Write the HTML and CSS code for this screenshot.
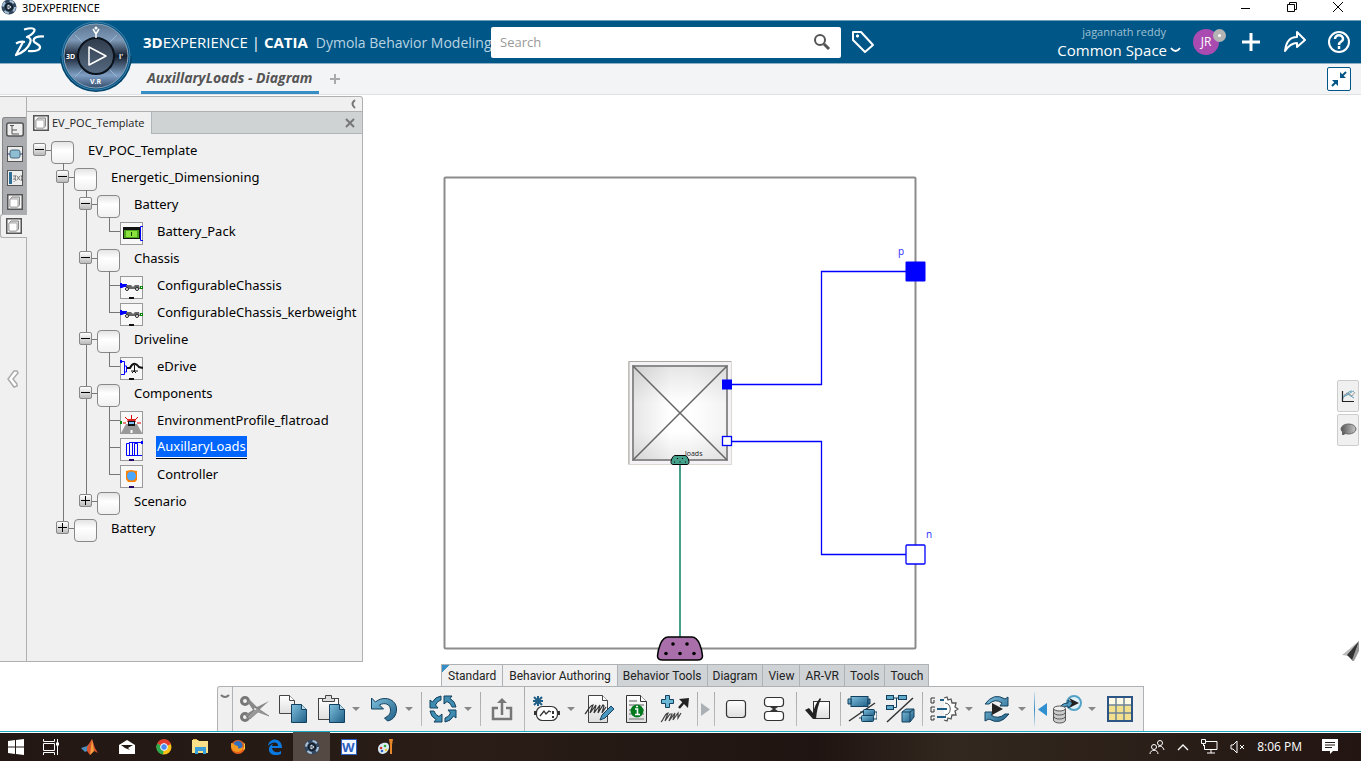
FILE: index.html
```html
<!DOCTYPE html>
<html lang="en">
<head>
    <meta charset="UTF-8">
    <meta name="viewport" content="width=device-width, initial-scale=1.0">
    <title>3DEXPERIENCE</title>
    <link rel="stylesheet" href="styles.css">
</head>
<body>

<!-- shared gradients and symbols -->
<svg class="defs" width="0" height="0" aria-hidden="true">
    <defs>
        <linearGradient id="blue" x1="0" y1="0" x2="1" y2="1">
            <stop offset="0" stop-color="#7fc0de"/><stop offset="1" stop-color="#1f5f86"/>
        </linearGradient>
        <linearGradient id="paper" x1="0" y1="0" x2="0" y2="1">
            <stop offset="0" stop-color="#ffffff"/><stop offset="1" stop-color="#dedede"/>
        </linearGradient>
        <linearGradient id="steel" x1="0" y1="0" x2="0" y2="1">
            <stop offset="0" stop-color="#5b7590"/><stop offset=".25" stop-color="#7f9ab8"/><stop offset=".5" stop-color="#15202f"/><stop offset=".8" stop-color="#7f9fc4"/><stop offset="1" stop-color="#344d6c"/>
        </linearGradient>
        <linearGradient id="hub" x1="0" y1="0" x2="0" y2="1">
            <stop offset="0" stop-color="#303c4d"/><stop offset="1" stop-color="#566a80"/>
        </linearGradient>
        <linearGradient id="gray" x1="0" y1="0" x2="1" y2="0">
            <stop offset="0" stop-color="#555"/><stop offset="1" stop-color="#c8c8c8"/>
        </linearGradient>
    </defs>
    <symbol id="compass-small" viewBox="0 0 16 16">
        <circle cx="8" cy="8" r="7.5" fill="#33485f"/>
        <circle cx="8" cy="8" r="6" fill="none" stroke="#a9c2d8" stroke-width="2" stroke-dasharray="4.7 4.7"/>
        <circle cx="8" cy="8" r="3.6" fill="#26384d" stroke="#0c1520"/>
        <path d="M7 6l3 2-3 2z" fill="none" stroke="#fff" stroke-width=".8"/>
    </symbol>
    <symbol id="cube" viewBox="0 0 16 16">
        <rect x=".75" y=".75" width="14.5" height="14.5" fill="#f6f6f6" stroke="#555" stroke-width="1.5"/>
        <path d="M3 5.500L5 3h7.500v8L10.500 13H3z" fill="#ddd" stroke="#888"/>
        <rect x="3" y="5" width="8" height="8" rx="1" fill="#fff" stroke="#aaa"/>
    </symbol>
    <symbol id="chassis" viewBox="0 0 23 23">
        <rect x=".5" y=".5" width="22" height="22" fill="#f8f8f8" stroke="#999"/>
        <path d="M0 12V7h2v1h5v3H4l-2 1z" fill="#0000ff"/>
        <path d="M6 9h5l2 2 2-2h4l1 4H7z" fill="#666"/>
        <circle cx="7" cy="13" r="1.500" fill="#fff" stroke="#222"/>
        <circle cx="17" cy="13" r="1.500" fill="#fff" stroke="#222"/>
        <rect x="20.500" y="10.500" width="2" height="2" fill="#fff" stroke="#008000"/>
        <rect x="9" y="21" width="5" height="2" fill="#111"/>
    </symbol>
    <symbol id="turn" viewBox="0 0 28 28">
        <path d="M12 1Q6 2 3.500 7L1 5v8h8l-2.500-3Q8 6 12 5z" fill="#3f8db3" stroke="#12405e"/>
    </symbol>
</svg>

<div class="titlebar">
    <svg width="16" height="16"><use href="#compass-small"/></svg>
    <span class="title">3DEXPERIENCE</span>
    <button class="win" aria-label="Minimize"><svg width="12" height="12"><path d="M1 7.500h9" stroke="#000"/></svg></button>
    <button class="win" aria-label="Restore"><svg width="12" height="12" fill="none" stroke="#000"><path d="M1.500 3.500h7v7h-7zM3.500 3.500v-2h7v7h-2"/></svg></button>
    <button class="win" aria-label="Close"><svg width="12" height="12"><path d="M1 1l10 10M11 1L1 11" stroke="#000"/></svg></button>
</div>

<header class="header">
    <svg class="logo" width="32" height="30" fill="none" stroke="#fff" stroke-width="2.200" stroke-linejoin="round">
        <path d="M10 2.500Q19 0 20.500 2.500 21 6 13 10 18 11 16 16 13 24 2 28L9 15"/>
        <path d="M2 16.500Q6 14 11 15"/>
        <path d="M30 9.500Q20 9 19.500 13.500C20 17 27 17 26 21Q24 25 14 24"/>
    </svg>
    <svg class="compass" width="76" height="74" viewBox="0 1 76 74">
        <path d="M2 36a36 36 0 0 0 72 0z" fill="#00446c"/>
        <circle cx="38" cy="36" r="34" fill="#0a5a8c" stroke="#3c7ea6"/>
        <circle cx="38" cy="36" r="32" fill="url(#steel)" stroke="#8ba3b8"/>
        <path d="M17 15l8 8M59 15l-8 8M17 57l8-8M59 57l-8-8" stroke="#9db6cf"/>
        <circle cx="38" cy="36" r="18" fill="url(#hub)" stroke="#0b121b" stroke-width="2"/>
        <path d="M31 27v18l17-9z" fill="none" stroke="#fff" stroke-width="1.500" stroke-linejoin="round"/>
        <path d="M35 9l3 5 3-5M38 13v5" fill="none" stroke="#fff" stroke-width="1.500"/>
        <circle cx="38" cy="8" r="1.500" fill="#fff"/>
        <text x="8" y="39" class="compass-text">3D</text>
        <text x="32" y="64" class="compass-text">V.R</text>
        <text x="61" y="39" class="compass-text">i'</text>
    </svg>
    <div class="brand"><b>3D</b>EXPERIENCE | <b>CATIA</b> <span class="app-name">Dymola Behavior Modeling</span></div>
    <form class="search">
        <input type="text" aria-label="Search" placeholder="Search">
        <button type="button" aria-label="Run search"><svg width="18" height="18" fill="none" stroke="#555"><circle cx="7" cy="7" r="5" stroke-width="2"/><path d="M11 11l5 5" stroke-width="3"/></svg></button>
    </form>
    <button class="icon-btn" aria-label="Tags"><svg width="24" height="24" fill="none" stroke="#fff" stroke-width="2" stroke-linejoin="round"><path d="M2 2h8l12 13-8 7L2 10z"/><circle cx="6.500" cy="6" r="1.200" fill="#fff" stroke-width="1"/></svg></button>
    <div class="user">
        <span class="user-name">jagannath reddy</span>
        <button class="space">Common Space <svg width="11" height="6"><path d="M1 1c3 4 6 4 9 0" fill="none" stroke="#fff" stroke-width="2"/></svg></button>
    </div>
    <div class="avatar">JR<span class="status"></span></div>
    <button class="icon-btn" aria-label="Add"><svg width="24" height="24"><path d="M12 3v18M3 12h18" stroke="#fff" stroke-width="3"/></svg></button>
    <button class="icon-btn" aria-label="Share"><svg width="24" height="24" fill="none" stroke="#fff" stroke-width="2" stroke-linejoin="round"><path d="M14 2l8 8-8 7v-4c-5 0-8 2-12 8 1-9 5-14 12-14z"/></svg></button>
    <button class="icon-btn" aria-label="Help"><svg width="24" height="24" fill="none" stroke="#fff"><circle cx="12" cy="12" r="10" stroke-width="2"/><path d="M8 9c0-5 8-5 8 0 0 3-4 2-4 6M12 16v3" stroke-width="2.500"/></svg></button>
</header>

<nav class="tabbar">
    <a class="doc-tab" href="#">AuxillaryLoads - Diagram</a>
    <button class="new-tab" aria-label="New tab"><svg width="12" height="12"><path d="M6 1v10M1 6h10" stroke="#aaa" stroke-width="2"/></svg></button>
    <button class="collapse" aria-label="Exit immersive"><svg width="22" height="22" fill="none" stroke="#005686" stroke-width="2"><path d="M4 18l5-5M18 4l-5 5"/><path d="M4 12h6v6zM12 4v6h6z" fill="#005686" stroke="none"/></svg></button>
</nav>

<main class="workspace">
    <aside class="panel">
        <div class="strip">
            <div class="strip-tabs">
                <div class="strip-group">
                    <button aria-label="Tree"><svg width="18" height="16"><rect x=".75" y="1" width="16.500" height="13" rx="2" fill="#eee" stroke="#555" stroke-width="1.500"/><path d="M4 3.500h4M6 4v8h7M6 8h5" fill="none" stroke="#555"/></svg></button>
                    <button aria-label="Component"><svg width="16" height="16"><rect x=".5" y=".5" width="15" height="15" fill="#eee" stroke="#555"/><path d="M0 8h16" stroke="#336"/><rect x="3" y="4" width="10" height="8" rx="2" fill="#8fbdd2" stroke="#47697c"/></svg></button>
                    <button aria-label="Parameters"><svg width="16" height="16"><rect x=".5" y=".5" width="15" height="15" fill="#eee" stroke="#555"/><path d="M3.500 2v12" stroke="#2f6f96" stroke-width="3"/><path d="M7 5v7" stroke="#777" stroke-dasharray="2 1"/><path d="M9 5q-2 3 0 6M14 5q2 3 0 6M10 6l3 4M13 6l-3 4" fill="none" stroke="#777"/></svg></button>
                    <button aria-label="Library"><svg width="16" height="16"><use href="#cube"/></svg></button>
                </div>
                <button class="active" aria-label="Template"><svg width="16" height="16"><use href="#cube"/></svg></button>
            </div>
            <button class="fold" aria-label="Fold panel"><svg width="14" height="20"><path d="M11 2L8 2 2 10l6 8 3-1v-2l-4-5 5-6z" fill="#fff" stroke="#aaa" stroke-width="1.500"/></svg></button>
            <div class="strip-rest"></div>
        </div>
        <div class="browser">
            <div class="browser-top"><button aria-label="Hide"><svg width="6" height="10"><path d="M5 1Q0 5 5 9" fill="none" stroke="#777" stroke-width="2"/></svg></button></div>
            <div class="browser-tabs">
                <span class="browser-tab"><svg width="16" height="16"><use href="#cube"/></svg>EV_POC_Template</span>
                <button aria-label="Close tab"><svg width="12" height="12"><path d="M2 2l8 8M10 2l-8 8" stroke="#777" stroke-width="2"/></svg></button>
            </div>
            <ul class="tree">
                <li>
                    <div class="row"><button class="toggle" aria-label="Collapse"></button><i class="box"></i><span>EV_POC_Template</span></div>
                    <ul>
                        <li>
                            <div class="row"><button class="toggle" aria-label="Collapse"></button><i class="box"></i><span>Energetic_Dimensioning</span></div>
                            <ul>
                                <li>
                                    <div class="row"><button class="toggle" aria-label="Collapse"></button><i class="box"></i><span>Battery</span></div>
                                    <ul>
                                        <li><div class="row leaf"><svg width="23" height="23"><rect x=".5" y=".5" width="22" height="22" fill="#f8f8f8" stroke="#999"/><path d="M23 4.500h-2.500v14H23" fill="none" stroke="#00f"/><rect x="3" y="5" width="17" height="12" fill="#111"/><rect x="4" y="8" width="15" height="8" fill="#4da51f"/><rect x="6" y="9" width="11" height="6" fill="#8be23f"/><path d="M11.500 10v4" stroke="#163c05"/></svg><span>Battery_Pack</span></div></li>
                                    </ul>
                                </li>
                                <li>
                                    <div class="row"><button class="toggle" aria-label="Collapse"></button><i class="box"></i><span>Chassis</span></div>
                                    <ul>
                                        <li><div class="row leaf"><svg width="23" height="23"><use href="#chassis"/></svg><span>ConfigurableChassis</span></div></li>
                                        <li><div class="row leaf"><svg width="23" height="23"><use href="#chassis"/></svg><span>ConfigurableChassis_kerbweight</span></div></li>
                                    </ul>
                                </li>
                                <li>
                                    <div class="row"><button class="toggle" aria-label="Collapse"></button><i class="box"></i><span>Driveline</span></div>
                                    <ul>
                                        <li><div class="row leaf"><svg width="23" height="23"><rect x=".5" y=".5" width="22" height="22" fill="#f8f8f8" stroke="#999"/><path d="M1 4.500h3.500v13H1M4.500 9h2v6h-2" fill="none" stroke="#00f"/><rect x="0" y="3" width="2" height="3" fill="#00f"/><path d="M7 11h3q4-8 9-1l4 1" fill="none" stroke="#111" stroke-width="2"/><path d="M11 14h7M14.500 8v6M12 16l2-2 2 2" fill="none" stroke="#111"/><rect x="9" y="21" width="5" height="2" fill="#111"/></svg><span>eDrive</span></div></li>
                                    </ul>
                                </li>
                                <li>
                                    <div class="row"><button class="toggle" aria-label="Collapse"></button><i class="box"></i><span>Components</span></div>
                                    <ul>
                                        <li><div class="row leaf"><svg width="23" height="23"><rect x=".5" y=".5" width="22" height="22" fill="#f8f8f8" stroke="#999"/><path d="M6 13h11l5 9H1z" fill="#999"/><path d="M11.500 22v-3" stroke="#fff" stroke-width="2"/><path d="M3 12h3M17 12h4M5 6l3 3M18 6l-3 3M11.500 4v4" stroke="#d00"/><path d="M8 8h7l1 3H7z" fill="#d22"/><rect x="8" y="10" width="7" height="5" fill="#111"/><rect x="9" y="11" width="5" height="2" fill="#7fc4ff"/><rect x="0" y="10" width="2" height="3" fill="#080"/></svg><span>EnvironmentProfile_flatroad</span></div></li>
                                        <li><div class="row leaf"><svg width="23" height="23"><rect x=".5" y=".5" width="22" height="22" fill="#f8f8f8" stroke="#999"/><path d="M6.500 5.500h3v12h-3zM14.500 5.500h3v12h-3zM9 4.500h13M9 17.500h13M12.500 5v13" fill="none" stroke="#00f"/><rect x="21" y="3" width="2" height="3" fill="#00f"/><rect x="9" y="21" width="5" height="2" fill="#206"/></svg><span class="selected">AuxillaryLoads</span></div></li>
                                        <li><div class="row leaf"><svg width="23" height="23"><rect x=".5" y=".5" width="22" height="22" fill="#f8f8f8" stroke="#999"/><path d="M6 6l5-1 6 1v9l-2 2H8l-2-3z" fill="#ff8000"/><circle cx="11.500" cy="11" r="4.500" fill="#4ba6ff"/><rect x="9" y="21" width="5" height="2" fill="#206"/></svg><span>Controller</span></div></li>
                                    </ul>
                                </li>
                                <li><div class="row"><button class="toggle plus" aria-label="Expand"></button><i class="box"></i><span>Scenario</span></div></li>
                            </ul>
                        </li>
                        <li><div class="row"><button class="toggle plus" aria-label="Expand"></button><i class="box"></i><span>Battery</span></div></li>
                    </ul>
                </li>
            </ul>
        </div>
    </aside>

    <section class="canvas">
        <svg class="diagram" width="500" height="566" viewBox="440 95 500 566">
            <defs>
                <linearGradient id="shadeX"><stop offset="0" stop-color="#000" stop-opacity=".1"/><stop offset=".4" stop-color="#000" stop-opacity="0"/><stop offset=".6" stop-color="#000" stop-opacity="0"/><stop offset="1" stop-color="#000" stop-opacity=".05"/></linearGradient>
                <linearGradient id="shadeY" x2="0" y2="1"><stop offset="0" stop-color="#000" stop-opacity=".1"/><stop offset=".4" stop-color="#000" stop-opacity="0"/><stop offset=".7" stop-color="#000" stop-opacity="0"/><stop offset="1" stop-color="#000" stop-opacity=".08"/></linearGradient>
            </defs>
            <rect x="444.500" y="177.500" width="471" height="471" rx="1" fill="none" stroke="#8c8c8c" stroke-width="2"/>
            <!-- loads component -->
            <rect x="628.500" y="361.500" width="103" height="103" fill="#f4f2f4" stroke="#dcd9d4"/>
            <path d="M629 464V361.500h102" fill="none" stroke="#aaa6a0"/>
            <rect x="633" y="366" width="94" height="94" fill="#fff"/>
            <rect x="633" y="366" width="94" height="94" fill="url(#shadeX)"/>
            <rect x="633" y="366" width="94" height="94" fill="url(#shadeY)" stroke="#8c8c8c" stroke-width="2"/>
            <path d="M633 366l94 94M727 366l-94 94" stroke="#666" stroke-width="1.500"/>
            <text x="685" y="456" class="node-label">loads</text>
            <!-- connections -->
            <path d="M727 384.500h94.500v-113H906M727 441.500h94.500v113H906" fill="none" stroke="#0000ff" stroke-width="1.300"/>
            <path d="M680 465v172" stroke="#45a08c" stroke-width="2"/>
            <!-- pins -->
            <rect x="722" y="379.500" width="10" height="10" fill="#0000ff"/>
            <rect x="722.500" y="436.500" width="9" height="9" fill="#fff" stroke="#0000ff" stroke-width="1.300"/>
            <rect x="905.500" y="261.500" width="20" height="20" rx="1" fill="#0000ff"/>
            <rect x="906" y="545" width="19" height="19" rx="1" fill="#fff" stroke="#0000ff" stroke-width="1.300"/>
            <text x="898" y="255" class="pin-label">p</text>
            <text x="926" y="538" class="pin-label">n</text>
            <path d="M675 455.500h10c2 0 4 4 4 7 0 1-1 2-2 2h-14c-1 0-2-1-2-2 0-3 2-7 4-7z" fill="#45a08c" stroke="#000"/>
            <path d="M677 458.500h1M682 458.500h1M674 462h1M679.500 462h1M685 462h1" stroke="#000"/>
            <path d="M668 637h24c7 0 10 13 10.500 19 0 3-2 4-5 4h-35c-3 0-5-1-5-4 .5-6 3.500-19 10.500-19z" fill="#a86fab" stroke="#000" stroke-width="1.500"/>
            <g><circle cx="673" cy="644" r="1.800"/><circle cx="687" cy="644" r="1.800"/><circle cx="666" cy="653.500" r="1.800"/><circle cx="680" cy="653.500" r="1.800"/><circle cx="694" cy="653.500" r="1.800"/></g>
        </svg>
        <div class="side-tools">
            <button aria-label="Plot"><svg width="16" height="16" fill="none"><path d="M2 8c5 1 8-4 12-5M2 12c4-7 8-9 10-9M6 5l8 5" stroke="#5b9bb5"/><path d="M4 7l4-2 4 3 3-4" stroke="#999"/><path d="M2.500 3v10.500H14" stroke="#222" stroke-width="1.200"/></svg></button>
            <button aria-label="Comments"><svg width="18" height="14"><ellipse cx="9.500" cy="6" rx="7.500" ry="5" fill="url(#gray)" stroke="#666"/><path d="M3 8v4H1l4 0 2-2z" fill="#666"/></svg></button>
            <svg class="pointer" width="17" height="21"><path d="M17 0L0 14l7 1z" fill="#bbb"/><path d="M17 0L5 14l6 6z" fill="#333"/><path d="M17 0v10l-5 10-2-1z" fill="#999"/></svg>
        </div>
    </section>
</main>

<footer class="action-bar">
    <div class="sections">
        <button class="light first">Standard</button><button class="light">Behavior Authoring</button><button>Behavior Tools</button><button>Diagram</button><button>View</button><button>AR-VR</button><button>Tools</button><button>Touch</button>
    </div>
    <div class="toolbar">
        <button class="grip" aria-label="Options"><svg width="10" height="5"><path d="M1 1q4 4 8 0" fill="none" stroke="#777" stroke-width="2"/></svg></button>
        <div class="tools">
            <button class="tool" aria-label="Cut"><svg width="32" height="28"><g fill="none" stroke="#777" stroke-width="3"><circle cx="6" cy="6" r="3.500"/><circle cx="6" cy="22" r="3.500"/></g><path d="M8 6l3-1 7 7 12-6-10 9-5 3-6 7-3-5 8-5z" fill="#888"/><path d="M8 22l7-7 2-3 13 9-11-4-8 7z" fill="#999" stroke="#666" stroke-width=".5"/><circle cx="16" cy="14" r="1" fill="#eee"/></svg></button>
            <button class="tool" aria-label="Copy"><svg width="30" height="30"><path d="M1.500 1.500h10l5 5v13h-15z" fill="url(#paper)" stroke="#444"/><path d="M11.500 1.500v5h5" fill="#fff" stroke="#444"/><path d="M13.500 10.500h10l5 5v13h-15z" fill="url(#blue)" stroke="#12405e"/><path d="M23.500 10.500v5h5" fill="#b9dcea" stroke="#12405e"/></svg></button>
            <button class="tool" aria-label="Paste"><svg width="30" height="30"><rect x="2.500" y="4.500" width="20" height="21" fill="url(#paper)" stroke="#444"/><path d="M6.500 7.500v-3h3v-3h6v3h3v3z" fill="#ddd" stroke="#444"/><path d="M13.500 10.500h10l5 5v13h-15z" fill="url(#blue)" stroke="#12405e"/><path d="M23.500 10.500v5h5" fill="#b9dcea" stroke="#12405e"/></svg></button>
            <button class="more" aria-label="More paste options"></button>
            <button class="tool" aria-label="Undo"><svg width="28" height="28"><path d="M1.500 3v11h12l-4-4c5-3 11-1 11 5 0 4-2 6-6 8l3 3c6-1 9-6 9-12 0-10-13-14-21-7z" fill="url(#blue)" stroke="#12405e"/></svg></button>
            <button class="more" aria-label="More undo options"></button>
            <i class="sep"></i>
            <button class="tool" aria-label="Update"><svg width="28" height="28"><use href="#turn"/><use href="#turn" transform="rotate(90 14 14)"/><use href="#turn" transform="rotate(180 14 14)"/><use href="#turn" transform="rotate(270 14 14)"/></svg></button>
            <button class="more" aria-label="More update options"></button>
            <i class="sep"></i>
            <button class="tool" aria-label="Export"><svg width="24" height="24" fill="none" stroke="#777" stroke-width="2.500"><path d="M8 11H3v11h18V11h-5M12 18V5"/><path d="M7 6l5-5 5 5z" fill="#777" stroke="none"/></svg></button>
            <i class="sep full"></i>
            <button class="tool" aria-label="New behavior"><svg width="30" height="30"><path d="M7 2v10M2 7h10M3 3l8 8M11 3l-8 8" stroke="#1f5f86" stroke-width="2"/><rect x="5.500" y="12.500" width="21" height="14" rx="6" fill="#fff" stroke="#333" stroke-width="1.200"/><path d="M3 17h3v4H3zM26 17h3v4h-3z" fill="#333"/><path d="M9 22l4-5 2 3 3-3 2 1" fill="none" stroke="#333" stroke-width="1.300"/><path d="M22 17v3M22 22v2" stroke="#333" stroke-width="2"/></svg></button>
            <button class="more" aria-label="More behaviors"></button>
            <button class="tool" aria-label="Edit text"><svg width="30" height="30"><path d="M4.500 1.500h14l5 5v22h-19z" fill="url(#paper)" stroke="#444"/><path d="M18.500 1.500v5h5" fill="#fff" stroke="#444"/><path d="M1 20c3-3 4-8 8-9l-3 8 6-8-2 8 6-8-2 8 5-8 1 1-2 7 4-6" fill="none" stroke="#333" stroke-width="1.200"/><path d="M16 26l2-5 9-9 3 3-9 9z" fill="#4b97bf" stroke="#12405e"/></svg></button>
            <button class="tool" aria-label="Information"><svg width="26" height="30"><path d="M2.500 1.500h14l6 6v21h-20z" fill="url(#paper)" stroke="#333"/><path d="M16.500 1.500v6h6" fill="#fff" stroke="#333"/><path d="M5 7h8M5 11h15M5 16h15M5 20h15M5 25h15" stroke="#aaa" stroke-width="2"/><circle cx="13" cy="17" r="6.500" fill="#007a1c"/><path d="M11 15h2.500v5M11 20.500h5M12 12.500h2" fill="none" stroke="#fff" stroke-width="1.600"/></svg></button>
            <button class="tool" aria-label="Create text"><svg width="30" height="30"><path d="M5.500 1.500h4v4h4v4h-4v4h-4v-4h-4v-4h4z" fill="#6bb7d6" stroke="#12405e"/><path d="M19 14l6-7" stroke="#222" stroke-width="2.500"/><path d="M19 5l10-1-1 10-3-3-3-3z" fill="#222"/><path d="M1 28c3-2 3-8 7-9l-3 8 5-7 2 0-3 7 6-8-2 7 5-7v5l3-5" fill="none" stroke="#444" stroke-width="1.200"/></svg></button>
            <i class="sep"></i>
            <button class="nav" aria-label="Next"><svg width="9" height="13"><path d="M0 0l9 6.500L0 13z" fill="#aab0b4"/></svg></button>
            <i class="sep"></i>
            <button class="tool" aria-label="Block"><svg width="22" height="20"><rect x="1.500" y="1.500" width="19" height="17" rx="3" fill="url(#paper)" stroke="#333" stroke-width="1.200"/></svg></button>
            <button class="tool" aria-label="Connected blocks"><svg width="22" height="26"><rect x="1.500" y="1.500" width="19" height="9" rx="3" fill="#fff" stroke="#333" stroke-width="1.200"/><rect x="1.500" y="15.500" width="19" height="9" rx="3" fill="#fff" stroke="#333" stroke-width="1.200"/><path d="M7 11h8l-3 2 3 2H7l3-2z" fill="#333"/></svg></button>
            <i class="sep"></i>
            <button class="tool" aria-label="Check"><svg width="26" height="26"><rect x="8.500" y="5.500" width="16" height="17" fill="url(#paper)" stroke="#333"/><path d="M0 14l4-2 4 5q2-9 7-15l1 1q-4 8-5 20H8z" fill="#222"/></svg></button>
            <i class="sep"></i>
            <button class="tool" aria-label="Compare blocks"><svg width="30" height="28"><path d="M2 26L28 8" stroke="#333" stroke-width="1.500"/><g fill="url(#blue)" stroke="#12405e"><rect x="4" y="1.500" width="17" height="10"/><path d="M1 4h3v5H1zM21 4h2v5h-2z"/><rect x="16.500" y="14.500" width="11" height="6" rx="1"/><rect x="14.500" y="20.500" width="12" height="6" rx="1"/></g><path d="M13 17h3M28 17h2v7h-3M12 23h2" fill="none" stroke="#12405e"/></svg></button>
            <button class="tool" aria-label="Compare structure"><svg width="30" height="28"><path d="M2 27L28 3" stroke="#333" stroke-width="1.500"/><path d="M8 3h6M11.500 3v9.500H8" fill="none" stroke="#12405e"/><g fill="#62aaca" stroke="#12405e"><rect x="1.500" y=".5" width="7" height="4"/><rect x="13.500" y=".5" width="8" height="4"/><rect x="1.500" y="10.500" width="7" height="4"/></g><path d="M17 17l4-3h8v8l-4 5h-8z" fill="url(#blue)" stroke="#12405e"/><path d="M17 17h8v10M25 17l4-3" fill="none" stroke="#12405e"/></svg></button>
            <i class="sep"></i>
            <button class="tool" aria-label="Settings"><svg width="30" height="26"><path d="M15 2l3-1 1 3 3-1 1 4 4 0-1 4 3 2-3 2 1 4-4 0-1 4-3-1-1 3-3-1" fill="#fff" stroke="#555" stroke-width="1.300"/><path d="M16 7c7 0 7 12 0 12" fill="none" stroke="#555"/><path d="M6 2H2v5h3v-3M6 11H2v5h3v-3M6 20H2v4h3v-2" fill="none" stroke="#333"/><path d="M11 4h4M8 13h10M8 21h9" stroke="#1f5f86" stroke-width="2"/></svg></button>
            <button class="more" aria-label="More settings"></button>
            <button class="tool" aria-label="Simulate"><svg width="30" height="28" fill="url(#blue)" stroke="#12405e"><path d="M3 9Q12-3 23 4l3-2v9h-8l2-3Q13 3 7 9zM27 19q-9 12-20 5l-4 2v-9h8l-2 3q7 5 14-1z"/><path d="M10 8l11 6-11 6z" fill="#222" stroke="none"/></svg></button>
            <button class="more" aria-label="More simulation options"></button>
            <i class="sep blue"></i>
            <button class="nav" aria-label="Previous"><svg width="9" height="13"><path d="M9 0L0 6.500 9 13z" fill="#2f8fcf"/></svg></button>
            <button class="tool" aria-label="Results"><svg width="30" height="30"><circle cx="22" cy="9" r="7" fill="#dff1f9" stroke="#54a3c7" stroke-width="2"/><path d="M7 17q1-8 9-8V6l6 4-6 4v-2q-5 0-5 5" fill="#4e9abf" stroke="#12405e"/><path d="M17 4l10 5-10 5 3-5z" fill="#222"/><path d="M1.500 15v11c0 4 12 4 12 0V15" fill="#ccc" stroke="#555"/><ellipse cx="7.500" cy="14.500" rx="6" ry="2.500" fill="#eee" stroke="#555"/><path d="M1.500 18c0 4 12 4 12 0M1.500 22c0 4 12 4 12 0" fill="none" stroke="#555"/></svg></button>
            <button class="more" aria-label="More results"></button>
            <button class="tool" aria-label="Table"><svg width="26" height="26"><rect x="1" y="1" width="24" height="24" fill="#f2e08c"/><rect x="1" y="1" width="24" height="8" fill="#fffbe6"/><path d="M9 1v24M17 1v24M1 9h24M1 17h24" stroke="#6f8599" stroke-width="1.500"/><rect x="1" y="1" width="24" height="24" fill="none" stroke="#2c5586" stroke-width="2"/></svg></button>
        </div>
    </div>
</footer>

<div class="taskbar">
    <button class="start" aria-label="Start"><svg width="16" height="16" fill="#fff"><path d="M0 2l7-1v6.500H0zM8 1l8-1v7.500H8zM0 8.500h7V15l-7-1zM8 8.500h8V16l-8-1z"/></svg></button>
    <button class="view" aria-label="Task view"><svg width="17" height="16" fill="none" stroke="#fff"><path d="M.5 0v2.500h11V0M.5 16v-2.500h11V16M.5 4.500h11v7H.5zM14.500 0v16"/><path d="M13 5h3" stroke-width="3"/></svg></button>
    <button aria-label="MATLAB"><svg width="18" height="16"><path d="M0 9l6-2 3-3-3 8-2 1z" fill="#4a8fc0"/><path d="M6 8l5-8 3 9 3 5-4-2-4 4-3-4z" fill="#d8532a"/><path d="M11 0l2 12-4 4z" fill="#f3a13c"/></svg></button>
    <button aria-label="Mail"><svg width="16" height="14"><path d="M0 5l8-5 8 5v9H0z" fill="#fff"/><path d="M2 5h12l-5 3 2 2-5-2z" fill="#221814"/></svg></button>
    <button aria-label="Chrome"><svg width="16" height="16"><circle cx="8" cy="8" r="7.500" fill="#fbc116"/><path d="M8 8L1.200 4.500A7.500 7.500 0 0 1 15 5z" fill="#e33b2e"/><path d="M8 8L1.200 4.500A7.500 7.500 0 0 0 7 15.500z" fill="#2da94f"/><circle cx="8" cy="8" r="3.400" fill="#4a8af4" stroke="#fff"/></svg></button>
    <button aria-label="File Explorer"><svg width="17" height="15"><path d="M0 1h6l1 1h9v12H0z" fill="#fbe08a"/><path d="M1 0h4v1H1z" fill="#e8b23c"/><path d="M3 8h11v7h-3v-3H6v3H3z" fill="#3aa0dc"/></svg></button>
    <button aria-label="Firefox"><svg width="16" height="16"><circle cx="8" cy="8" r="7" fill="#e8601a"/><circle cx="8" cy="6.500" r="4.500" fill="#2f6fc0"/><path d="M1 4c3 0 4 3 7 3-1 3 2 3 5 1 0 6-10 7-12 0z" fill="#f59a22"/><path d="M13 3c2 3 1 6 0 8l2-1 0-5z" fill="#ffd24a"/></svg></button>
    <button aria-label="Edge"><svg width="16" height="16"><path d="M1 7C2-2 15-2 15 9H5c1 5 6 5 9 3v3c-6 3-13 0-12-6 1-3 3-4 4-4-1 1-1 2-1 2h6c0-5-7-4-10 0z" fill="#0a7ae0"/></svg></button>
    <button class="running" aria-label="3DEXPERIENCE"><svg width="16" height="16"><use href="#compass-small"/></svg></button>
    <button aria-label="Word"><svg width="16" height="16"><rect x=".5" y=".5" width="15" height="15" fill="#f2f6ff" stroke="#2b5fc0"/><text x="1" y="13" class="word">W</text></svg></button>
    <button aria-label="Paint"><svg width="17" height="16"><path d="M1 10c0-5 5-7 9-6 4 2 2 10-4 11-2 0-5-1-5-5z" fill="#d9ebf3"/><circle cx="4" cy="9" r="1.300" fill="#d33"/><circle cx="8" cy="7" r="1.300" fill="#3a3"/><circle cx="5" cy="12" r="1.300" fill="#36c"/><circle cx="9" cy="11" r="1.300" fill="#ec3"/><path d="M12 0h4l-1 6v9h-2V6z" fill="#e8862a"/></svg></button>
    <div class="tray">
        <svg width="16" height="16" fill="none" stroke="#fff"><circle cx="5" cy="8" r="2.500"/><path d="M1 15c0-5 8-5 8 0"/><circle cx="11" cy="4" r="2.500"/><path d="M9 8c3-2 5 0 6 3"/></svg>
        <svg width="12" height="8" fill="none" stroke="#fff" stroke-width="1.300"><path d="M1 7l5-5 5 5"/></svg>
        <svg width="17" height="15" fill="none" stroke="#fff"><path d="M5 2.500h11v8H3.500V6M10 10v4M6 14h8M.5.5h4v4h-4zM2.500 4v3"/></svg>
        <svg width="15" height="14" fill="none" stroke="#fff"><path d="M1 5h2l4-4v12L3 9H1zM10 5l4 4M14 5l-4 4"/></svg>
        <time>8:06 PM</time>
        <svg width="16" height="15"><path d="M0 0h16v12h-5l-3 3v-3H0z" fill="#fff"/><path d="M3 3.500h10M3 6h10M3 8.500h7" stroke="#221814"/></svg>
    </div>
</div>
</body>
</html>
```

FILE: styles.css
```css
* {
    box-sizing: border-box;
}
body {
    margin: 0;
    min-height: 100vh;
    display: flex;
    flex-direction: column;
    background-color: #fff;
    font-family: "Open Sans", sans-serif;
    font-size: 12px;
    color: #222;
}
button {
    display: flex;
    align-items: center;
    justify-content: center;
    padding: 0;
    border: 0;
    background: none;
    font: inherit;
    color: inherit;
}
svg {
    display: block;
    flex: none;
}
.defs {
    position: absolute;
}

/* window title */
.titlebar {
    display: flex;
    align-items: center;
    height: 20px;
    padding: 0 0 6px 1px;
    color: #000;
}
.title {
    flex: 1;
    margin-left: 5px;
    font-family: "Noto Sans", sans-serif;
    font-size: 11px;
}
.win {
    width: 46px;
}

/* top bar */
.header {
    position: relative;
    display: flex;
    align-items: center;
    height: 44px;
    padding: 0 10px 0 14px;
    background-color: #005686;
    border-top: 1px solid #6f9fb8;
    border-bottom: 1px solid #8fb0c4;
    color: #fff;
}
.compass {
    position: absolute;
    left: 58px;
    top: 0;
    z-index: 2;
}
.compass-text {
    font-size: 7px;
    font-weight: bold;
    fill: #fff;
}
.brand {
    width: 348px;
    margin-left: 97px;
    font-size: 15px;
    white-space: nowrap;
}
.app-name {
    margin-left: 4px;
    font-size: 14px;
    color: #b9d3e2;
}
.search {
    display: flex;
    width: 350px;
    height: 31px;
    background-color: #fff;
    border-radius: 2px;
}
.search input {
    flex: 1;
    padding: 0 9px;
    border: 0;
    background: none;
    font: inherit;
    font-size: 13px;
}
.search input::placeholder {
    color: #999;
}
.search button {
    width: 38px;
}
.icon-btn {
    width: 24px;
    margin-left: 20px;
}
.search + .icon-btn {
    margin-left: 10px;
}
.user {
    display: flex;
    flex-direction: column;
    align-items: flex-end;
    margin-left: auto;
}
.user-name {
    padding-right: 15px;
    font-size: 11px;
    line-height: 16px;
    color: #9fc1d4;
}
.space {
    gap: 3px;
    font-size: 15px;
    line-height: 20px;
}
.avatar {
    position: relative;
    width: 26px;
    height: 26px;
    margin: 0 0 0 12px;
    border-radius: 50%;
    background-color: #a94bb0;
    font-size: 12px;
    line-height: 26px;
    text-align: center;
}
.status {
    position: absolute;
    right: -7px;
    top: 0;
    width: 13px;
    height: 13px;
    border: 5px solid #b4b4b4;
    border-radius: 50%;
    background-color: #fff;
}

/* document tabs */
.tabbar {
    display: flex;
    align-items: center;
    height: 31px;
    padding: 0 10px 0 141px;
    background-color: #f3f4f6;
    border-bottom: 1px solid #dfe1e4;
}
.doc-tab {
    align-self: stretch;
    padding: 0 6px;
    border-bottom: 3px solid #368ec4;
    font-size: 14px;
    font-weight: bold;
    font-style: italic;
    line-height: 28px;
    color: #555;
    text-decoration: none;
}
.new-tab {
    margin-left: 10px;
}
.collapse {
    width: 24px;
    height: 24px;
    margin-left: auto;
    border: 1px solid #005686;
    border-radius: 2px;
    background-color: #fff;
}

/* left panel */
.workspace {
    display: flex;
    flex: 1;
    padding-top: 1px;
}
.panel {
    display: flex;
    width: 363px;
    background-color: #f0f0f0;
    border: 1px solid #aeb0b2;
    border-left: 0;
    border-radius: 0 3px 0 0;
}
.strip {
    display: flex;
    flex-direction: column;
    width: 27px;
    border-right: 1px solid #aeb0b2;
}
.strip-tabs, .strip-rest {
    flex: 1 1 0;
}
.strip-group {
    margin: 20px 0 0 2px;
    background-color: #aaacb0;
    border: 1px solid #888;
    border-width: 1px 0 0 1px;
    border-radius: 3px 0 0 0;
}
.strip-tabs button {
    width: 24px;
    height: 24px;
}
.strip-tabs .active {
    width: 27px;
    padding-right: 1px;
    background-color: #f0f0f0;
    border: 1px solid #aeb0b2;
    border-width: 1px 0 1px 1px;
    border-radius: 3px 0 0 3px;
}
.browser {
    flex: 1;
}
.browser-top {
    display: flex;
    justify-content: flex-end;
    height: 15px;
    padding-right: 6px;
    border-bottom: 1px solid #aeb0b2;
}
.browser-tabs {
    display: flex;
    align-items: center;
    justify-content: space-between;
    height: 22px;
    padding-right: 6px;
    background: #cfd3d3;
    border-bottom: 1px solid #aeb6ba;
}
.browser-tab {
    display: flex;
    align-items: center;
    gap: 3px;
    height: 22px;
    padding: 0 6px;
    background-color: #f0f0f0;
    border-right: 1px solid #aeb6ba;
    font-size: 11px;
}
.tree {
    padding: 2px 0 0 6px;
    font-family: "Noto Sans", sans-serif;
    font-size: 13px;
    color: #000;
}
ul {
    margin: 0;
    padding: 0;
    list-style: none;
}
.tree ul {
    margin-left: 23px;
}
.tree li {
    position: relative;
}
/* vertical connector */
.tree ul > li::before {
    content: "";
    position: absolute;
    left: 7px;
    top: 0;
    bottom: 0;
    border-left: 1px solid #777;
}
.tree ul > li:last-child::before {
    bottom: auto;
    height: 14px;
}
.row {
    position: relative;
    display: flex;
    align-items: center;
    height: 27px;
}
/* horizontal connector */
.row::before {
    content: "";
    position: absolute;
    left: 7px;
    top: 14px;
    width: 14px;
    border-top: 1px solid #777;
}
.row.leaf {
    padding-left: 18px;
}
.row > * {
    position: relative;
}
.row > svg, .box {
    top: 3px;
    margin-right: 13px;
}
.row span {
    padding: 0 1px;
}
.toggle {
    width: 13px;
    height: 13px;
    margin-right: 5px;
    background: linear-gradient(#fff, #bbb);
    border: 1px solid #888;
    border-radius: 2px;
}
.toggle::before, .plus::after {
    content: "";
    position: absolute;
    width: 9px;
    height: 1px;
    background-color: #000;
}
.plus::after {
    width: 1px;
    height: 9px;
}
.box {
    width: 23px;
    height: 23px;
    border: 1px solid #888;
    border-radius: 4px;
    background: linear-gradient(#e4e4e4, #fff 40%, #f0f0f0);
}
.row .selected {
    background-color: #0066ff;
    box-shadow: 0 1px #fff, 0 2px #000;
    line-height: 21px;
    color: #fff;
}

/* diagram */
.canvas {
    display: flex;
    flex: 1;
}
.diagram {
    margin-left: 77px;
    margin-top: -1px;
}
.pin-label {
    font-size: 10px;
    fill: #2b2bff;
}
.node-label {
    font-size: 7px;
    fill: #222;
}
.side-tools {
    display: flex;
    flex-direction: column;
    gap: 2px;
    margin-left: auto;
    padding: 284px 2px 0 0;
}
.side-tools button {
    width: 22px;
    height: 32px;
    background-color: #f0f0f0;
    border: 1px solid #ccc;
    border-radius: 2px;
}
.pointer {
    margin-top: auto;
    align-self: flex-end;
}

/* action bar */
.action-bar {
    align-self: center;
    padding-top: 2px;
}
.sections {
    display: flex;
    margin-left: 224px;
    font-family: Roboto, sans-serif;
}
.sections button {
    height: 22px;
    padding: 0 5px;
    background-color: #cfd3d5;
    border: 1px solid #aeb2b5;
    border-width: 1px 1px 0 0;
}
.sections .light {
    padding: 0 6px;
    background-color: #f0f0f0;
}
.sections .first {
    border-left-width: 1px;
    background: linear-gradient(135deg, #368ec4 5px, #f0f0f0 5px);
}
.toolbar {
    display: flex;
    height: 45px;
    background-color: #f0f0f0;
    border: 1px solid #aeb2b5;
    border-bottom: 0;
    border-radius: 3px 0 0 0;
}
.grip {
    align-items: flex-start;
    width: 15px;
    padding-top: 7px;
    border-right: 1px solid #aeb2b5;
}
.tools {
    display: flex;
    padding: 0 4px 0 3px;
}
.tool {
    width: 38px;
}
.more {
    justify-content: flex-start;
    width: 15px;
    padding-left: 2px;
}
.more::before {
    content: "";
    border: 4px solid transparent;
    border-top-color: #888;
    border-bottom: 0;
}
.nav {
    width: 11px;
}
.sep {
    width: 6px;
    margin: 5px 0;
    background: linear-gradient(#aaa, #bbb) center / 1px 100% no-repeat;
}
.sep.full {
    margin: 0;
}
.sep.blue {
    background-image: linear-gradient(#d5e3ec, #368ec4, #d5e3ec);
}

/* taskbar */
.taskbar {
    display: flex;
    height: 30px;
    border-top: 1px solid #19a9c0;
    background: linear-gradient(90deg, #221713, #2a1d17 35%, #1f1411 60%, #33281f 70%, #221512);
    box-shadow: inset 0 1px #fff;
    color: #fff;
}
.taskbar button {
    width: 37px;
}
.taskbar .start {
    width: 31px;
}
.taskbar .view {
    width: 40px;
}
.taskbar .running {
    background-color: #554944;
}
.word {
    font-size: 13px;
    font-weight: bold;
    fill: #2b5fc0;
}
.tray {
    display: flex;
    align-items: center;
    gap: 12px;
    margin-left: auto;
    padding-right: 23px;
}
.tray time {
    margin-right: 8px;
}
```
